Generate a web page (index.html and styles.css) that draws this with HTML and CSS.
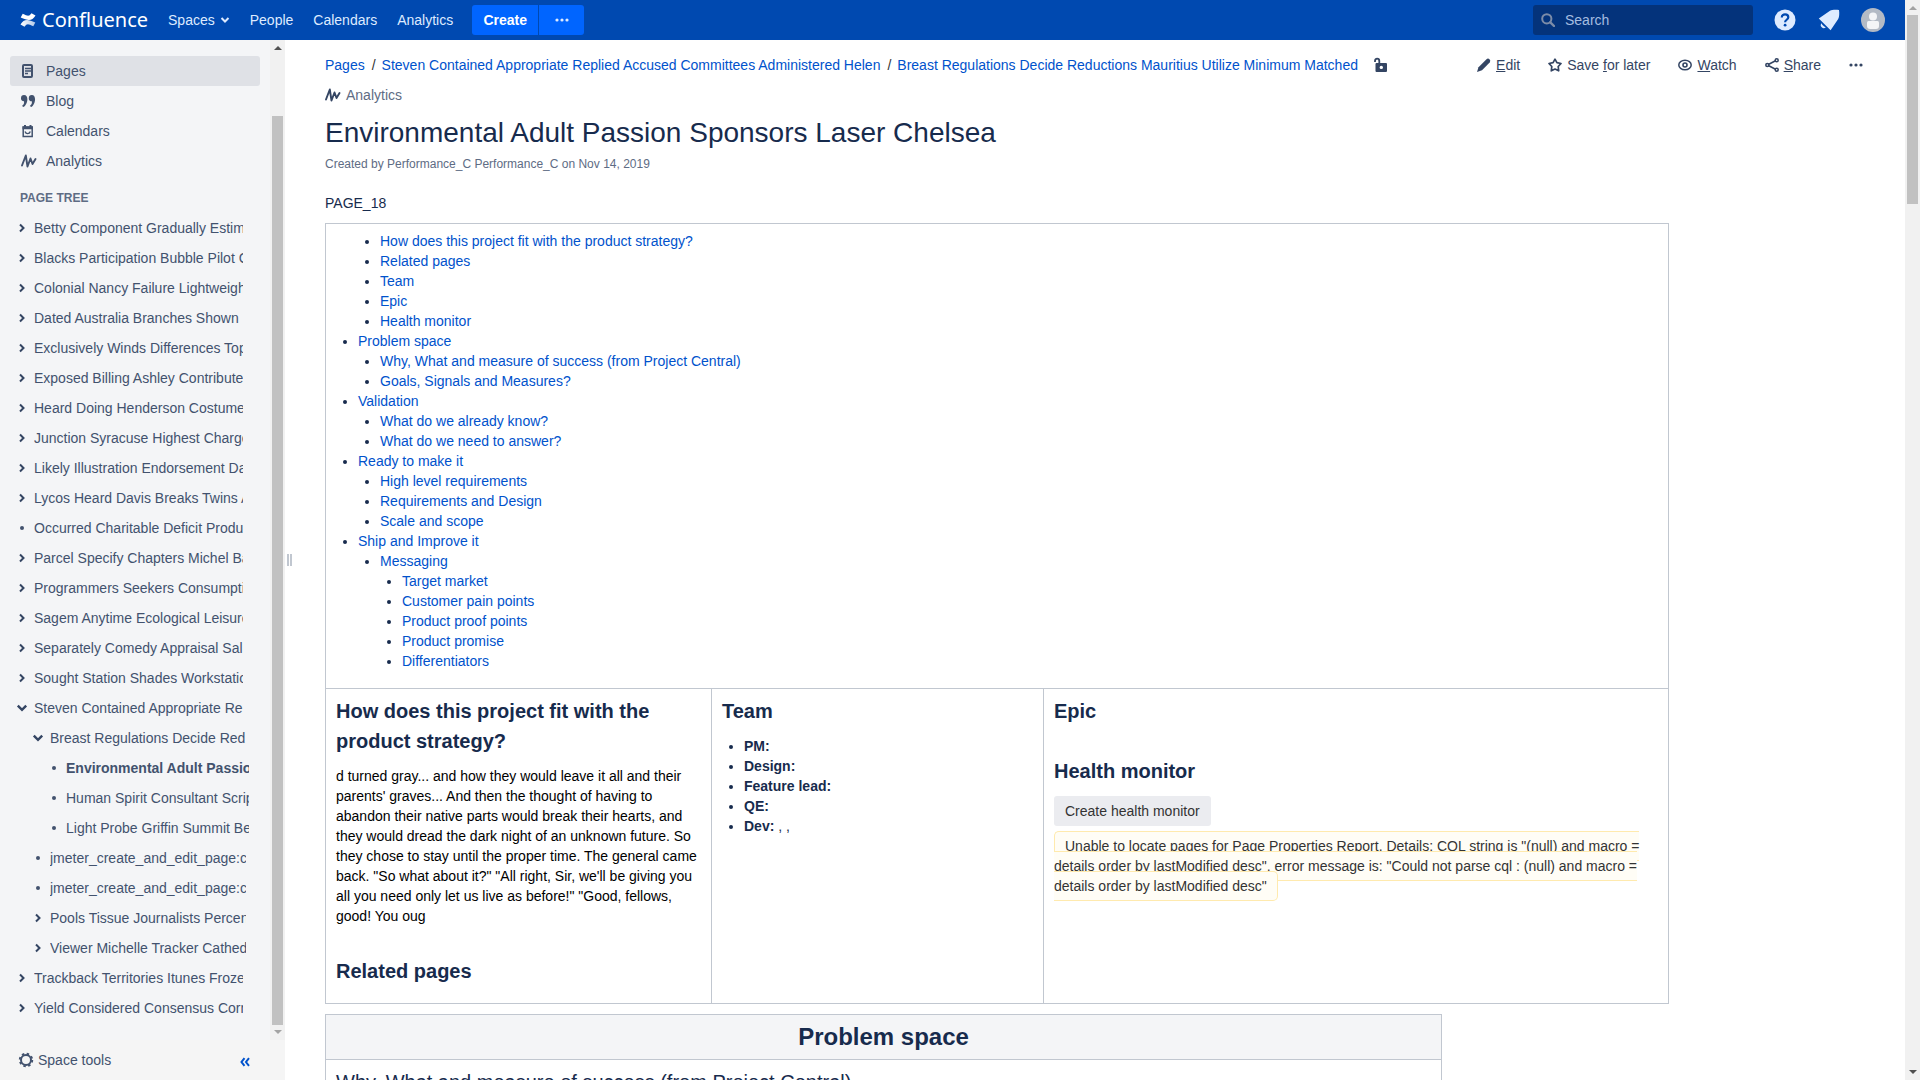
FILE: index.html
```html
<!DOCTYPE html>
<html lang="en">
<head>
<meta charset="utf-8">
<title>Environmental Adult Passion Sponsors Laser Chelsea - Confluence</title>
<link rel="stylesheet" href="styles.css">
</head>
<body>
<svg class="sprite" aria-hidden="true">
  <symbol id="i-right" viewBox="0 0 8 10"><path d="M2 1.5 5.5 5 2 8.5" fill="none" stroke="currentColor" stroke-width="2"/></symbol>
  <symbol id="i-down" viewBox="0 0 10 8"><path d="M1.5 2 5 5.5 8.5 2" fill="none" stroke="currentColor" stroke-width="2"/></symbol>
  <symbol id="i-dots" viewBox="0 0 14 4"><circle cx="2" cy="2" r="1.6" fill="currentColor"/><circle cx="7" cy="2" r="1.6" fill="currentColor"/><circle cx="12" cy="2" r="1.6" fill="currentColor"/></symbol>
  <symbol id="i-pulse" viewBox="0 0 16 14"><path d="M1 11.500 4.800 1.500 6.500 12.500 9.500 4.500 11.500 10 14.500 5" fill="none" stroke="currentColor" stroke-width="1.900" stroke-linejoin="round" stroke-linecap="round"/></symbol>
</svg>
<div class="window">
  <div class="app">
    <header class="topbar">
      <a class="logo" href="#">
        <svg width="18" height="16" viewBox="0 0 18 16"><defs><linearGradient id="lg" x1="0" x2="1"><stop offset="0" stop-color="#fff"/><stop offset="1" stop-color="#fff" stop-opacity=".7"/></linearGradient></defs><path d="M1.5 12.500 5.500 14.800C8 11.400 9 11.700 14.300 14.300L16.300 10.400C8.500 6.800 5 6.800 1.500 12.500Z" fill="url(#lg)"/><path d="M16.500 3.500 12.500 1.200C10 4.600 9 4.300 3.700 1.700L1.700 5.600C9.500 9.200 13 9.200 16.500 3.500Z" fill="#fff"/></svg>
        <span>Confluence</span>
      </a>
      <nav class="menu">
        <a href="#">Spaces <svg width="10" height="8"><use href="#i-down"/></svg></a>
        <a href="#">People</a><a href="#">Calendars</a><a href="#">Analytics</a>
      </nav>
      <div class="create"><button type="button">Create</button><button type="button" aria-label="Create from template"><svg width="14" height="4"><use href="#i-dots"/></svg></button></div>
      <label class="search"><svg width="14" height="14" viewBox="0 0 14 14"><circle cx="5.800" cy="5.800" r="4.600" fill="none" stroke="currentColor" stroke-width="2"/><path d="M9.300 9.300 13 13" stroke="currentColor" stroke-width="2.400" stroke-linecap="round"/></svg><input type="text" placeholder="Search" aria-label="Search"></label>
      <a class="tool" href="#" aria-label="Help"><svg width="22" height="22" viewBox="0 0 22 22"><circle cx="11" cy="11" r="10.500" fill="#deebff"/><path d="M7.800 8.400C7.800 4.300 14.300 4.500 14.300 8.300 14.300 10.700 11.100 10.800 11.100 13.200" fill="none" stroke="#0049b0" stroke-width="2.200"/><circle cx="11.100" cy="16.200" r="1.400" fill="#0049b0"/></svg></a>
      <a class="tool" href="#" aria-label="Notifications"><svg width="22" height="22" viewBox="0 0 22 22"><path d="M.8 9.500 12 1.800C14 .6 18 .6 21 1 21.500 4 21.300 8 20.200 10L12.600 21.200ZM3.700 14.200A2.800 2.800 0 1 0 7.800 18.300L6.200 17.600 4.300 15.800Z" fill="#deebff"/></svg></a>
      <a class="tool" href="#" aria-label="Profile"><svg width="24" height="24" viewBox="0 0 24 24"><circle cx="12" cy="12" r="12" fill="#b3bac5"/><circle cx="12" cy="8.500" r="4" fill="#f4f5f7"/><path d="M6 14.500Q6 13 7.500 13H16.500Q18 13 18 14.500V18Q18 21 15 21H9Q6 21 6 18Z" fill="#f4f5f7"/></svg></a>
    </header>
    <div class="body">
      <aside class="sidebar">
        <div class="side-scroll">
          <div class="side-main">
            <nav class="space-nav">
              <a class="active" href="#"><svg width="16" height="16" viewBox="0 0 16 16"><rect x="2" y="2" width="9" height="12" rx="1" fill="none" stroke="currentColor" stroke-width="2"/><path d="M4 5.500H10M4 8H10M4 10.500H7" stroke="currentColor" stroke-width="1.300"/></svg>Pages</a>
              <a href="#"><svg width="16" height="16" viewBox="0 0 16 16"><path d="M0 5A3 3 0 0 1 3 2C8.500 2 6.500 12 2.500 14L1 13C3 11.500 3.300 10 3 8.200A3 3 0 0 1 0 5ZM7.800 5A3 3 0 0 1 10.800 2C16 2 14.300 12 10.300 14L8.800 13C10.800 11.500 11.100 10 10.800 8.200A3 3 0 0 1 7.800 5Z" fill="currentColor"/></svg>Blog</a>
              <a href="#"><svg width="16" height="16" viewBox="0 0 16 16"><path d="M2.200 4H11.200V13.500H2.200Z" fill="none" stroke="currentColor" stroke-width="1.500"/><path d="M1.500 3.500H12V6.200H1.500ZM3 2H5V4H3ZM8.500 2H10.500V4H8.500Z" fill="currentColor"/><path d="M4 8.500C5 11.300 8.300 11.300 9.300 8.500" fill="none" stroke="currentColor" stroke-width="1.400"/></svg>Calendars</a>
              <a href="#"><svg width="16" height="14"><use href="#i-pulse"/></svg>Analytics</a>
            </nav>
            <h2 class="tree-title">PAGE TREE</h2>
            <ul class="tree">
              <li><svg class="tw"><use href="#i-right"/></svg><a href="#">Betty Component Gradually Estimated</a></li>
              <li><svg class="tw"><use href="#i-right"/></svg><a href="#">Blacks Participation Bubble Pilot Care</a></li>
              <li><svg class="tw"><use href="#i-right"/></svg><a href="#">Colonial Nancy Failure Lightweight</a></li>
              <li><svg class="tw"><use href="#i-right"/></svg><a href="#">Dated Australia Branches Shown</a></li>
              <li><svg class="tw"><use href="#i-right"/></svg><a href="#">Exclusively Winds Differences Topics</a></li>
              <li><svg class="tw"><use href="#i-right"/></svg><a href="#">Exposed Billing Ashley Contribute</a></li>
              <li><svg class="tw"><use href="#i-right"/></svg><a href="#">Heard Doing Henderson Costume</a></li>
              <li><svg class="tw"><use href="#i-right"/></svg><a href="#">Junction Syracuse Highest Charge</a></li>
              <li><svg class="tw"><use href="#i-right"/></svg><a href="#">Likely Illustration Endorsement Dates</a></li>
              <li><svg class="tw"><use href="#i-right"/></svg><a href="#">Lycos Heard Davis Breaks Twins Arts</a></li>
              <li><i class="dot"></i><a href="#">Occurred Charitable Deficit Produ</a></li>
              <li><svg class="tw"><use href="#i-right"/></svg><a href="#">Parcel Specify Chapters Michel Based</a></li>
              <li><svg class="tw"><use href="#i-right"/></svg><a href="#">Programmers Seekers Consumption</a></li>
              <li><svg class="tw"><use href="#i-right"/></svg><a href="#">Sagem Anytime Ecological Leisure</a></li>
              <li><svg class="tw"><use href="#i-right"/></svg><a href="#">Separately Comedy Appraisal Sal</a></li>
              <li><svg class="tw"><use href="#i-right"/></svg><a href="#">Sought Station Shades Workstation</a></li>
              <li><svg class="tw"><use href="#i-down"/></svg><a href="#">Steven Contained Appropriate Re</a>
                <ul>
                  <li><svg class="tw"><use href="#i-down"/></svg><a href="#">Breast Regulations Decide Red</a>
                    <ul>
                      <li class="current"><i class="dot"></i><a href="#">Environmental Adult Passion</a></li>
                      <li><i class="dot"></i><a href="#">Human Spirit Consultant Scripts</a></li>
                      <li><i class="dot"></i><a href="#">Light Probe Griffin Summit Best</a></li>
                    </ul>
                  </li>
                  <li><i class="dot"></i><a href="#">jmeter_create_and_edit_page:create</a></li>
                  <li><i class="dot"></i><a href="#">jmeter_create_and_edit_page:create</a></li>
                  <li><svg class="tw"><use href="#i-right"/></svg><a href="#">Pools Tissue Journalists Percent</a></li>
                  <li><svg class="tw"><use href="#i-right"/></svg><a href="#">Viewer Michelle Tracker Cathed</a></li>
                </ul>
              </li>
              <li><svg class="tw"><use href="#i-right"/></svg><a href="#">Trackback Territories Itunes Froze</a></li>
              <li><svg class="tw"><use href="#i-right"/></svg><a href="#">Yield Considered Consensus Corner</a></li>
            </ul>
          </div>
          <div class="scrollbar side-bar"><i class="up dark"></i><b></b><i class="down"></i></div>
        </div>
        <footer class="side-foot">
          <a href="#"><svg width="16" height="16" viewBox="0 0 16 16"><circle cx="8" cy="8" r="5" fill="none" stroke="currentColor" stroke-width="2"/><circle cx="8" cy="8" r="6.300" fill="none" stroke="currentColor" stroke-width="1.800" stroke-dasharray="2.470 2.470"/></svg>Space tools</a>
          <button type="button" aria-label="Collapse sidebar"><svg width="10" height="10" viewBox="0 0 10 10"><path d="M4.500 1.200 1.500 5 4.500 8.800M9 1.200 6 5 9 8.800" fill="none" stroke="currentColor" stroke-width="2"/></svg></button>
        </footer>
      </aside>
      <div class="grip" aria-hidden="true"></div>
      <main class="content">
        <div class="head">
          <div class="crumbs">
            <ol><li><a href="#">Pages</a></li><li><a href="#">Steven Contained Appropriate Replied Accused Committees Administered Helen</a></li><li><a href="#">Breast Regulations Decide Reductions Mauritius Utilize Minimum Matched</a></li></ol>
            <svg class="lock" width="14" height="16" viewBox="0 0 14 16"><path d="M1 5V4C1 .8 5.300.8 5.300 4V7" fill="none" stroke="currentColor" stroke-width="1.800"/><path fill-rule="evenodd" d="M2.500 6H12Q13 6 13 7V14Q13 15 12 15H2.500Q1.500 15 1.500 14V7Q1.500 6 2.500 6ZM7.300 8.700A1.700 1.700 0 1 0 7.300 12.100 1.700 1.700 0 1 0 7.300 8.700Z" fill="currentColor"/></svg>
          </div>
          <div class="actions">
            <a href="#"><svg width="14" height="14" viewBox="0 0 14 14"><path d="M9.500 1.200Q11 0 12.500 1.300 14 2.800 12.700 4.500L5 12.200 0 14 1.500 9.200Z" fill="currentColor"/></svg><span><u>E</u>dit</span></a>
            <a href="#"><svg width="14" height="14" viewBox="0 0 14 14"><path d="M7 1.200 8.900 4.700 13 5.500 10.200 8.500 10.700 12.800 7 11 3.300 12.800 3.800 8.500 1 5.500 5.100 4.700Z" fill="none" stroke="currentColor" stroke-width="1.700" stroke-linejoin="round"/></svg><span>Save <u>f</u>or later</span></a>
            <a href="#"><svg width="14" height="14" viewBox="0 0 14 14"><ellipse cx="7" cy="7" rx="6.200" ry="4.800" fill="none" stroke="currentColor" stroke-width="1.500"/><circle cx="7" cy="7" r="2" fill="none" stroke="currentColor" stroke-width="1.600"/></svg><span><u>W</u>atch</span></a>
            <a href="#"><svg width="14" height="14" viewBox="0 0 14 14"><path d="M11.500 2.300 2.300 7 11.500 11.800" fill="none" stroke="currentColor" stroke-width="1.600"/><g fill="#fff" stroke="currentColor" stroke-width="1.500"><circle cx="11.700" cy="2.300" r="1.500"/><circle cx="2.300" cy="7" r="1.500"/><circle cx="11.700" cy="11.700" r="1.500"/></g></svg><span><u>S</u>hare</span></a>
            <button type="button" aria-label="More actions"><svg width="14" height="4"><use href="#i-dots"/></svg></button>
          </div>
        </div>
        <a class="page-analytics" href="#"><svg width="16" height="14"><use href="#i-pulse"/></svg>Analytics</a>
        <h1>Environmental Adult Passion Sponsors Laser Chelsea</h1>
        <p class="meta">Created by Performance_C Performance_C on Nov 14, 2019</p>
        <p class="intro">PAGE_18</p>
        <table class="grid overview">
          <colgroup><col class="c1"><col class="c2"><col></colgroup>
          <tr><td colspan="3">
            <ul class="toc">
              <li class="bare"><ul>
                <li><a href="#">How does this project fit with the product strategy?</a></li>
                <li><a href="#">Related pages</a></li>
                <li><a href="#">Team</a></li>
                <li><a href="#">Epic</a></li>
                <li><a href="#">Health monitor</a></li>
              </ul></li>
              <li><a href="#">Problem space</a><ul>
                <li><a href="#">Why, What and measure of success (from Project Central)</a></li>
                <li><a href="#">Goals, Signals and Measures?</a></li>
              </ul></li>
              <li><a href="#">Validation</a><ul>
                <li><a href="#">What do we already know?</a></li>
                <li><a href="#">What do we need to answer?</a></li>
              </ul></li>
              <li><a href="#">Ready to make it</a><ul>
                <li><a href="#">High level requirements</a></li>
                <li><a href="#">Requirements and Design</a></li>
                <li><a href="#">Scale and scope</a></li>
              </ul></li>
              <li><a href="#">Ship and Improve it</a><ul>
                <li><a href="#">Messaging</a><ul>
                  <li><a href="#">Target market</a></li>
                  <li><a href="#">Customer pain points</a></li>
                  <li><a href="#">Product proof points</a></li>
                  <li><a href="#">Product promise</a></li>
                  <li><a href="#">Differentiators</a></li>
                </ul></li>
              </ul></li>
            </ul>
          </td></tr>
          <tr>
            <td>
              <h2>How does this project fit with the product strategy?</h2>
              <p class="story">d turned gray... and how they would leave it all and their parents' graves... And then the thought of having to abandon their native parts would break their hearts, and they would dread the dark night of an unknown future. So they chose to stay until the proper time. The general came back. "So what about it?" "All right, Sir, we'll be giving you all you need only let us live as before!" "Good, fellows, good! You oug</p>
              <h2>Related pages</h2>
            </td>
            <td>
              <h2>Team</h2>
              <ul class="team"><li><strong>PM:</strong></li><li><strong>Design:</strong></li><li><strong>Feature lead:</strong></li><li><strong>QE:</strong></li><li><strong>Dev:</strong> , ,</li></ul>
            </td>
            <td>
              <h2>Epic</h2>
              <h2>Health monitor</h2>
              <button class="monitor" type="button">Create health monitor</button>
              <p class="report"><span class="warning">Unable to locate pages for Page Properties Report. Details: CQL string is "(null) and macro = details order by lastModified desc", error message is: "Could not parse cql : (null) and macro = details order by lastModified desc"</span></p>
            </td>
          </tr>
        </table>
        <table class="grid problem">
          <tr><th>Problem space</th></tr>
          <tr><td><h2 class="light">Why, What and measure of success (from Project Central)</h2></td></tr>
        </table>
      </main>
    </div>
  </div>
  <div class="scrollbar page-bar"><i class="up"></i><b></b><i class="down dark"></i></div>
</div>
</body>
</html>
```
FILE: styles.css
```css
* { box-sizing: border-box; }
body { margin: 0; font: 14px/20px "Liberation Sans", Arial, sans-serif; color: #172b4d; background: #fff; }
a { color: #0052cc; text-decoration: none; }
h1, h2, p, ul, ol { margin: 0; padding: 0; }
button { font: inherit; border: 0; padding: 0; background: none; color: inherit; }
svg { flex: none; }
.sprite { display: none; }
.window { display: flex; height: 100vh; overflow: hidden; }
.app { flex: 1; min-width: 0; display: flex; flex-direction: column; }

/* Top bar */
.topbar { flex: none; height: 40px; display: flex; align-items: center; padding: 0 20px 0 19px; background: #0049b0; color: #deebff; }
.topbar a { color: #deebff; display: flex; align-items: center; }
.topbar .logo { gap: 5px; color: #fff; font: 20px/24px "Noto Sans", "Open Sans", sans-serif; }
.menu { display: flex; gap: 20px; padding: 0 19px 0 20px; }
.menu a { gap: 5px; }
.create { display: flex; gap: 1px; }
.create button { height: 30px; width: 45px; display: flex; align-items: center; justify-content: center; background: #0065ff; border-radius: 0 3px 3px 0; color: #deebff; }
.create button:first-child { width: 66px; font-weight: bold; color: #fff; border-radius: 3px 0 0 3px; }
.search { margin-left: auto; margin-right: 10px; width: 220px; height: 30px; display: flex; align-items: center; gap: 10px; padding-left: 8px; border-radius: 3px; background: #04337b; color: #7c8ca8; }
.search input { flex: 1; min-width: 0; border: 0; padding: 0; background: none; font: inherit; color: #b3d4ff; outline: 0; }
.search input::placeholder { color: #a4bde0; opacity: 1; }
.topbar .tool { width: 44px; justify-content: center; }
.topbar .tool:last-child { margin-right: -10px; }

/* Sidebar */
.body { flex: 1; min-height: 0; display: flex; }
.sidebar { flex: none; width: 285px; display: flex; flex-direction: column; background: #f4f5f7; }
.side-scroll { flex: 1; min-height: 0; display: flex; }
.side-main { flex: 1; min-width: 0; overflow: hidden; padding: 16px 10px 0; }
.sidebar a { color: #42526e; }
.space-nav a { display: flex; align-items: center; height: 30px; gap: 9px; padding: 0 11px; border-radius: 3px; }
.space-nav .active { background: #dfe1e6; }
.tree-title { margin: 12px 0 5px 10px; font-size: 12px; line-height: 20px; color: #5e6c84; }
.tree { width: 233px; padding-left: 6px; }
.tree li { display: grid; grid-template-columns: 12px minmax(0, 1fr); column-gap: 6px; align-items: center; list-style: none; }
.tree ul { grid-column: 1 / -1; padding-left: 16px; margin-right: -3px; }
.tree li > a { overflow: hidden; white-space: nowrap; line-height: 30px; }
.tree .tw { width: 12px; height: 10px; color: #344563; }
.tree .dot { width: 4px; height: 4px; border-radius: 50%; background: #42526e; justify-self: center; }
.tree .current > a { font-weight: bold; }
.side-foot { flex: none; height: 40px; display: flex; align-items: center; justify-content: space-between; padding: 0 35px 0 18px; background: #f5f5f5; }
.side-foot a { display: flex; align-items: center; gap: 4px; }
.side-foot button { color: #0052cc; display: flex; padding-top: 4px; }
.grip { flex: none; align-self: center; width: 5px; height: 12px; margin: 0 33px 0 2px; border: solid #c1c7d0; border-width: 0 2px; }

/* Scroll bars */
.scrollbar { flex: none; width: 15px; display: flex; flex-direction: column; align-items: center; background: #f1f1f1; }
.scrollbar b { width: 11px; background: #c1c1c1; }
.scrollbar i { width: 0; height: 0; border: 4px solid transparent; }
.scrollbar .up { border-top: 0; border-bottom-color: #a3a3a3; margin: 6px 0 5px; }
.scrollbar .down { border-bottom: 0; border-top-color: #a3a3a3; margin: 5px 0 6px; }
.scrollbar .up.dark { border-bottom-color: #505050; }
.scrollbar .down.dark { border-top-color: #505050; }
.side-bar b { flex: 1; margin-top: 61px; }
.page-bar b { height: 17.5%; margin-bottom: auto; }

/* Page header */
.content { flex: 1; min-width: 0; overflow: hidden; padding: 15px 42px 0 0; }
.head { display: flex; justify-content: space-between; }
.crumbs { display: flex; align-items: center; gap: 16px; }
.crumbs ol { display: flex; list-style: none; }
.crumbs li + li::before { content: "/"; padding: 0 6px 0 7px; color: #333; }
.lock, .actions, .page-analytics svg { color: #344563; }
.actions { display: flex; align-items: center; gap: 28px; }
.actions a { display: flex; align-items: center; gap: 5px; color: #344563; }
.actions button { display: flex; }
.page-analytics { display: flex; align-items: center; gap: 5px; margin-top: 10px; color: #5e6c84; }
h1 { margin-top: 12px; font-size: 28px; line-height: 32px; font-weight: normal; }
.meta { margin-top: 5px; font-size: 12px; color: #5e6c84; }
.intro { margin: 19px 0 10px; }

/* Page body */
.grid { border-collapse: collapse; table-layout: fixed; }
.grid td, .grid th { border: 1px solid #c1c7d0; padding: 7px 10px; vertical-align: top; text-align: left; }
.grid ul { padding-left: 22px; list-style-type: disc; }
.overview { width: calc(100% - 194px); }
.c1 { width: 386px; }
.c2 { width: 332px; }
.toc, .overview td > h2:last-child { margin-bottom: 10px; }
.toc .bare { list-style: none; }
.grid h2 { font-size: 20px; line-height: 30px; }
.grid h2 + h2, .story + h2 { margin-top: 30px; }
.story { margin-top: 10px; color: #000; }
.team { margin-top: 10px; }
.monitor { display: block; height: 30px; margin: 10px 0; padding: 0 11px; border-radius: 3px; background: #ebecf0; color: #333; }
.warning { padding: 6px 10px; border: 1px solid #ffeaae; border-radius: 5px; background: #fffdf6; color: #333; }
.problem { width: 1117px; margin-top: 10px; }
.grid th { font-size: 24px; line-height: 30px; text-align: center; background: #f4f5f7; }
.grid .light { font-weight: normal; }
```
